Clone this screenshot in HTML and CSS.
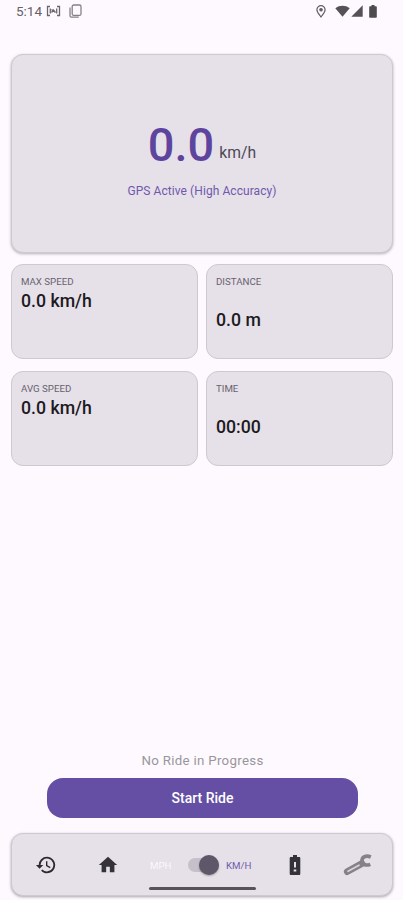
FILE: index.html
```html
<!DOCTYPE html>
<html lang="en">
<head>
	<meta charset="UTF-8">
	<meta name="viewport" content="width=device-width, initial-scale=1">
	<title>Ride</title>
	<link rel="stylesheet" href="styles.css">
</head>
<body>
	<div class="app">
		<div class="status">
			<span class="clock">5:14</span>
			<svg class="cast" width="15" height="12" viewBox="0 0 15 12" fill="none" stroke="#6b686c" stroke-width="1.3">
				<path d="M4 1.500H1.500v9H4M11 1.500h2.500v9H11M4.300 3.500v5M10.700 3.500v5M5.500 7.500l2-2.500 2 2.500M5.500 4.500l4 3"/>
			</svg>
			<svg class="copy" width="13" height="14" viewBox="0 0 13 14" fill="none" stroke="#858286" stroke-width="1.3">
				<rect x="3.200" y="1" width="8.800" height="10.400" rx="1.500"/>
				<path d="M1 3.500v8.300c0 .8.5 1.300 1.300 1.300h7.500"/>
			</svg>
			<svg class="pin" width="10" height="13" viewBox="0 0 10 13" fill="none" stroke="#625f63" stroke-width="1.2">
				<path d="M5 12C3 9.300 .9 7.200 .9 4.800a4.100 4.100 0 0 1 8.200 0C9.100 7.200 7 9.300 5 12z"/>
				<circle cx="5" cy="4.700" r="1.200" fill="#625f63"/>
			</svg>
			<svg class="wifi" width="15" height="12" viewBox="0 0 15 12" fill="#555256">
				<path d="M.3 3.200C4.300-.1 10.700-.1 14.700 3.200L7.500 11.800z"/>
			</svg>
			<svg class="signal" width="12" height="12" viewBox="0 0 12 12" fill="#555256">
				<path d="M11.700.3v11.400H.3z"/>
			</svg>
			<svg class="battery" width="8" height="13" viewBox="0 0 8 13" fill="#4f4c50">
				<path d="M2.500 0h3v1.300H7c.5 0 .8.300.8.800v9.800c0 .5-.3.800-.8.800H1c-.5 0-.8-.3-.8-.8V2.100c0-.5.3-.8.8-.8h1.500z"/>
			</svg>
		</div>

		<div class="card speed">
			<div class="reading">
				<span class="num">0.0</span>
				<span class="unit">km/h</span>
			</div>
			<div class="gps">GPS Active (High Accuracy)</div>
		</div>

		<div class="stats">
			<div class="card stat">
				<div class="label">MAX SPEED</div>
				<div class="value">0.0 km/h</div>
			</div>
			<div class="card stat low">
				<div class="label">DISTANCE</div>
				<div class="value">0.0 m</div>
			</div>
			<div class="card stat">
				<div class="label">AVG SPEED</div>
				<div class="value">0.0 km/h</div>
			</div>
			<div class="card stat low">
				<div class="label">TIME</div>
				<div class="value">00:00</div>
			</div>
		</div>

		<div class="ride">
			<div class="state">No Ride in Progress</div>
			<button class="start">Start Ride</button>
		</div>

		<div class="card nav">
			<div class="tabs">
				<svg class="history" width="22" height="22" viewBox="0 0 24 24" fill="#2b2830">
					<path d="M13 3a9 9 0 0 0-9 9H1l4 4 4-4H6a7 7 0 1 1 2.060 4.940l-1.420 1.420A9 9 0 1 0 13 3zm-1 5v5l4.250 2.520.770-1.280-3.520-2.090V8z"/>
				</svg>
				<svg class="home" width="22" height="22" viewBox="0 0 24 24" fill="#35323a">
					<path d="M10 20v-6h4v6h5v-8h3L12 3 2 12h3v8z"/>
				</svg>
				<div class="units">
					<span class="mph">MPH</span>
					<span class="switch"><i class="thumb"></i></span>
					<span class="kmh">KM/H</span>
				</div>
				<svg class="charge" width="12" height="20" viewBox="0 0 12 20" fill="#35323a">
					<path fill-rule="evenodd" d="M4 0h4v2h2c.8 0 1.300.5 1.300 1.300v15.400c0 .8-.5 1.300-1.300 1.300H2c-.8 0-1.300-.5-1.300-1.300V3.300C.7 2.500 1.200 2 2 2h2zM5 7v5.500h2V7zM4.700 14.500v2h2.600v-2z"/>
				</svg>
				<svg class="wrench" width="30" height="22" viewBox="0 0 30 22" fill="none" stroke="#858189">
					<path d="M4.200 17.700L19 9.500" stroke-width="6.600" stroke-linecap="round"/>
					<path d="M27.800 3C23.500 1.200 19.500 2.500 19 6c-.5 4 3.500 6.300 8.300 4.300" stroke-width="3.600"/>
					<path d="M5 17.300L16 11.200" stroke="#d8d2db" stroke-width="1.700" stroke-linecap="round"/>
				</svg>
			</div>
			<div class="handle"></div>
		</div>
	</div>
</body>
</html>
```
FILE: styles.css
```css
*{
	margin: 0;
	padding: 0;
	box-sizing: border-box;
}
body{
	background: #fef9ff;
	font-family: Roboto, "Liberation Sans", sans-serif;
	color: #1c1a20;
}
svg{
	display: block;
	flex: none;
}
.app{
	height: 900px;
	padding: 0 10px 4px 11px;
	display: flex;
	flex-direction: column;
	overflow: hidden;
}

/* status bar */
.status{
	height: 22px;
	margin-bottom: 32px;
	padding: 0 15px 0 5px;
	display: flex;
	align-items: center;
}
.clock{
	font-size: 13.5px;
	color: #656267;
	width: 30px;
}
.copy{
	margin-left: 8px;
}
.pin{
	margin-left: auto;
}
.wifi{
	margin-left: 9px;
}
.signal{
	margin-left: 1px;
}
.battery{
	margin: 0 1px 0 6px;
}

.card{
	background: #e6e0e9;
	border: 1px solid #cdc8d1;
	border-radius: 12px;
}

/* current speed */
.speed{
	height: 199px;
	padding-top: 62px;
	text-align: center;
	box-shadow: 0 1px 3px rgba(0,0,0,.3);
}
.reading{
	display: flex;
	justify-content: center;
	align-items: flex-end;
	gap: 5px;
}
.num{
	font-size: 47px;
	line-height: 56px;
	font-weight: 500;
	color: #5d459e;
}
.unit{
	font-size: 15.7px;
	line-height: 20px;
	padding-bottom: 10px;
	color: #4d4954;
}
.gps{
	margin-top: 10px;
	font-size: 12px;
	line-height: 16px;
	letter-spacing: .07px;
	color: #7059ab;
}

/* stats */
.stats{
	margin-top: 11px;
	display: grid;
	grid-template-columns: 1fr 1fr;
	gap: 12px 8px;
}
.stat{
	height: 95px;
	padding: 10px 9px;
}
.label{
	font-size: 9.7px;
	line-height: 14px;
	color: #67636d;
}
.value{
	font-size: 17.7px;
	line-height: 25px;
	font-weight: 500;
}
.low .value{
	margin-top: 19px;
}

/* start button */
.ride{
	margin: auto 35px 15px 36px;
	text-align: center;
}
.state{
	font-size: 13.3px;
	line-height: 18px;
	letter-spacing: .3px;
	color: #99969b;
	margin-bottom: 8px;
}
.start{
	display: block;
	width: 100%;
	height: 40px;
	border: none;
	border-radius: 16px;
	background: #654fa4;
	color: #fff;
	font-family: inherit;
	font-size: 14px;
	font-weight: 500;
}

/* bottom bar */
.nav{
	height: 63px;
	box-shadow: 0 1px 3px rgba(0,0,0,.35);
}
.tabs{
	height: 53px;
	padding: 9px 0 0 23px;
	display: flex;
	align-items: center;
}
.home{
	margin-left: 40px;
}
.units{
	margin-left: 31px;
	width: 102px;
	display: flex;
	align-items: center;
	font-size: 9.7px;
}
.mph{
	color: #fbf8fd;
	width: 38px;
}
.switch{
	width: 31px;
	height: 14px;
	border-radius: 7px;
	background: #c5c0c9;
	margin-right: 7px;
	display: flex;
	justify-content: flex-end;
	align-items: center;
}
.thumb{
	flex: none;
	width: 20px;
	height: 20px;
	border-radius: 50%;
	background: #5e5769;
	box-shadow: 0 1px 2px rgba(0,0,0,.3);
}
.kmh{
	color: #705dac;
}
.charge{
	margin-left: 37px;
}
.wrench{
	margin-left: 42px;
}
.handle{
	width: 107px;
	height: 3px;
	border-radius: 2px;
	background: #57535b;
	margin-left: 137px;
}
```
